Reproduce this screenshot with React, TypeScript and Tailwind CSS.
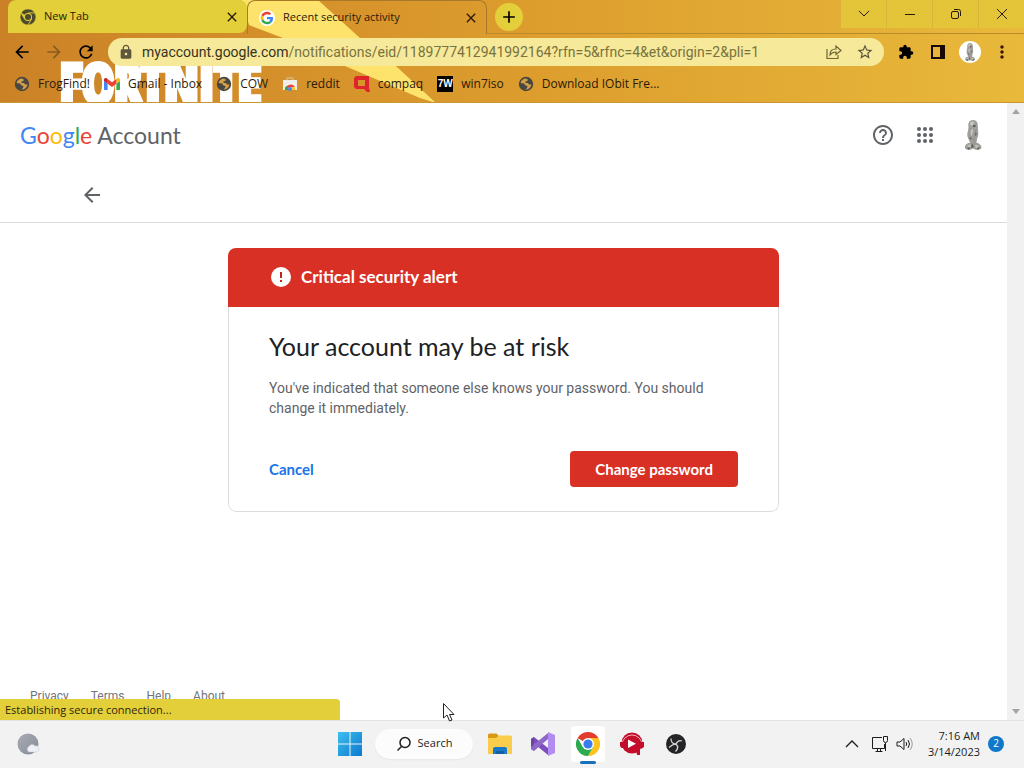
import type { ReactNode } from "react";
import {
  MdAdd,
  MdArrowBack,
  MdArrowForward,
  MdClose,
  MdExtension,
  MdHelpOutline,
  MdLock,
  MdMoreVert,
  MdRefresh,
  MdStarBorder,
} from "react-icons/md";

const ui = "font-['Open_Sans','Noto_Sans',sans-serif]";

function ChromeLogo({ className, mono = false }: { className: string; mono?: boolean }) {
  const c = mono ? ["#4b4a2c", "#4b4a2c", "#4b4a2c", "#4b4a2c"] : ["#e33b2e", "#fcc31e", "#2da94f", "#3b7ded"];
  const line = mono ? "#e2cf3a" : "none";
  return (
    <svg viewBox="0 0 48 48" className={className} aria-hidden="true">
      <path d="M24 24 3.2 12A24 24 0 0 1 44.8 12H24Z" fill={c[0]} stroke={line} strokeWidth="2" />
      <path d="M24 12H44.8A24 24 0 0 1 24 48L34.4 30Z" fill={c[1]} stroke={line} strokeWidth="2" />
      <path d="M3.2 12A24 24 0 0 0 24 48L34.4 30 24 24 13.6 30Z" fill={c[2]} stroke={line} strokeWidth="2" />
      <circle cx="24" cy="24" r="12" fill={mono ? "#e2cf3a" : "#fff"} />
      <circle cx="24" cy="24" r="9.2" fill={c[3]} />
    </svg>
  );
}

function GoogleG() {
  return (
    <svg viewBox="0 0 48 48" className="size-4 shrink-0" aria-hidden="true">
      <circle cx="24" cy="24" r="24" fill="#fff" />
      <g transform="translate(5 5) scale(.79)">
        <path fill="#EA4335" d="M24 9.5c3.54 0 6.71 1.22 9.21 3.6l6.85-6.85C35.9 2.38 30.47 0 24 0 14.62 0 6.51 5.38 2.56 13.22l7.98 6.19C12.43 13.72 17.74 9.5 24 9.5z" />
        <path fill="#4285F4" d="M46.98 24.55c0-1.57-.15-3.09-.38-4.55H24v9.02h12.94c-.58 2.96-2.26 5.48-4.78 7.18l7.73 6c4.51-4.18 7.09-10.36 7.09-17.65z" />
        <path fill="#FBBC05" d="M10.53 28.59A14.5 14.5 0 0 1 9.77 24c0-1.6.27-3.14.76-4.59l-7.98-6.19A23.9 23.9 0 0 0 0 24c0 3.88.92 7.54 2.56 10.78l7.97-6.19z" />
        <path fill="#34A853" d="M24 48c6.48 0 11.93-2.13 15.89-5.81l-7.73-6c-2.15 1.45-4.92 2.3-8.16 2.3-6.26 0-11.57-4.22-13.47-9.91l-7.98 6.19C6.51 42.62 14.62 48 24 48z" />
      </g>
    </svg>
  );
}

function Statue({ className }: { className: string }) {
  return (
    <svg viewBox="0 0 20 32" className={className} aria-hidden="true">
      <path d="M10 1C6 1 5 4 5.500 8L5 12C4 14 4 18 5.500 20L7 24C4 23.500 1.500 26 2 29 4 32 8 31 10 29.500 12 31 16 32 18.500 29 18.500 26 16 24 13.500 24L14 20C15.500 17 15.500 14 15 11L14.800 7C15 3 13 1 10 1Z" fill="#a19f9a" />
      <path d="M7 4C8 2.500 10 2 11 3L10 6 8 7ZM7 11 10 10 9 17 7 16ZM4 27 8 25 7 29ZM12 26 16 27 13 29Z" fill="#cbc9c4" />
      <path d="M10 6H12.500V8H10ZM6 18 9 19 8 21ZM12 13 14 15 12 17ZM9 24 11 28 8 29ZM14 29 17 28 15 31ZM4 29 7 28 6 31Z" fill="#5f5d59" />
      <path d="M13 10 12 15 11 22 12 25M8 9 7 14 9 21" fill="none" stroke="#8d8a85" strokeWidth=".700" />
    </svg>
  );
}

function AppsGrid() {
  const cells = [6, 12, 18];
  return (
    <svg viewBox="0 0 24 24" className="size-6" fill="currentColor" aria-hidden="true">
      {cells.map((y) => cells.map((x) => <circle key={`${x}-${y}`} cx={x} cy={y} r="2" />))}
    </svg>
  );
}

function Gmail() {
  return (
    <svg viewBox="52 42 88 66" className="h-3 w-4 shrink-0" aria-hidden="true">
      <path fill="#4285f4" d="M58 108h14V74L52 59v43c0 3.320 2.690 6 6 6" />
      <path fill="#34a853" d="M120 108h14c3.320 0 6-2.690 6-6V59l-20 15" />
      <path fill="#fbbc04" d="M120 48v26l20-15v-8c0-7.420-8.470-11.650-14.400-7.200" />
      <path fill="#ea4335" d="M72 74V48l24 18 24-18v26L96 92" />
      <path fill="#c5221f" d="M52 51v8l20 15V48l-5.600-4.200c-5.940-4.450-14.400-.220-14.400 7.200" />
    </svg>
  );
}

function Store() {
  return (
    <svg viewBox="0 0 16 16" className="size-4 shrink-0" aria-hidden="true">
      <path d="M5 4V2h6v2" fill="none" stroke="#d6c8b0" />
      <path d="M1 4h14v10H1Z" fill="#f1eee8" />
      <path d="M3 14a5.500 5.500 0 0 1 10-3H8Z" fill="#e8453c" />
      <path d="M3 14a5.500 5.500 0 0 1 1-4l3 4Z" fill="#32a350" />
      <path d="M9 14h4.500a5.500 5.500 0 0 0-1-3H8Z" fill="#f9c72f" />
      <circle cx="8" cy="13" r="2" fill="#4c85e8" />
    </svg>
  );
}

function Compaq() {
  return (
    <svg viewBox="0 0 16 16" className="size-4 shrink-0" aria-hidden="true">
      <path fillRule="evenodd" d="M2 0h13v12l1 4h-3l-3-3H2L0 11V2ZM4 4v6h7V4Z" fill="#dd252b" />
    </svg>
  );
}

function Bookmark({ icon, label }: { icon: ReactNode; label: string }) {
  return (
    <a href="#" className="flex items-center gap-2 whitespace-nowrap">
      {icon}
      {label}
    </a>
  );
}

const globe = (
  <svg viewBox="0 0 16 16" className="size-4 shrink-0" aria-hidden="true">
    <circle cx="8" cy="8" r="7.200" fill="#494740" />
    <path d="M7 2.500C4.500 3 2.800 5 2.600 7L6 7.500 7.500 9.500 9.500 10 9 12 7.500 13.500C10.500 13.500 13 11.500 13.400 8.500L11 8.500 10 7H7.500V5.500L9.500 5V3Z" fill="#d3a047" />
  </svg>
);

function BrowserChrome() {
  return (
    <header className={`relative overflow-hidden bg-linear-to-r from-[#cb8227] via-[#dc9c2d] to-[#e8b93b] text-xs text-[#2a1a08] ${ui}`}>
      <svg className="absolute top-0 left-0 h-[103px] w-[440px]" viewBox="0 0 440 103" aria-hidden="true">
        <path d="M241 0H318L360 38 398 68 436 103 420 98 345 66 283 38 249 25Z" fill="#fde36c" />
      </svg>
      <span aria-hidden="true" className="absolute top-[52px] left-[60px] font-['Open_Sans_Condensed','Roboto_Condensed','Noto_Sans_Condensed','Liberation_Sans',sans-serif] text-[54px] leading-[60px] font-black text-white [-webkit-text-stroke:5px_white]">
        FORTNITE
      </span>

      <div className="relative flex h-[34px] items-start">
        <div className="ml-2 flex h-[33px] w-[239px] items-center gap-2 rounded-t-lg rounded-br-lg bg-[#e2cf3a] pr-[7px] pl-3 text-[11px]">
          <ChromeLogo mono className="size-4" />
          <span className="flex-1">New Tab</span>
          <button aria-label="Close New Tab"><MdClose className="size-4" /></button>
        </div>
        <div className="flex h-[34px] w-[240px] items-center gap-2 rounded-t-lg border-x border-t border-[#a9792a] pr-[7px] pl-[11px] text-[11px]">
          <GoogleG />
          <span className="flex-1">Recent security activity</span>
          <button aria-label="Close Recent security activity"><MdClose className="size-4" /></button>
        </div>
        <div className="flex h-[34px] flex-1 justify-between border-b border-[#b98a2c]">
          <button aria-label="New tab" className="mt-[3px] ml-2 flex size-7 items-center justify-center rounded-full bg-[#e2cf3a]">
            <MdAdd className="size-5 text-black" />
          </button>
          <div className="flex h-7 divide-x divide-[#d6b636] bg-[#e4c53a]">
            <button aria-label="Search tabs" className="flex w-[46px] items-center justify-center">
              <svg viewBox="0 0 12 12" className="size-3" fill="none" stroke="currentColor"><path d="m1 3 5 5 5-5" /></svg>
            </button>
            <button aria-label="Minimize" className="flex w-[46px] items-center justify-center">
              <svg viewBox="0 0 12 12" className="size-3" fill="none" stroke="currentColor"><path d="M1 6.500h10" /></svg>
            </button>
            <button aria-label="Restore" className="flex w-[46px] items-center justify-center">
              <svg viewBox="0 0 12 12" className="size-3" fill="none" stroke="currentColor"><rect x="1.500" y="3.500" width="7" height="7" rx="1.500" /><path d="M4 1.500h4.500a2 2 0 0 1 2 2V8" /></svg>
            </button>
            <button aria-label="Close window" className="flex w-[45px] items-center justify-center">
              <svg viewBox="0 0 12 12" className="size-3" fill="none" stroke="currentColor"><path d="m1 1 10 10M11 1 1 11" /></svg>
            </button>
          </div>
        </div>
      </div>

      <div className="relative flex h-9 items-center gap-3 pr-1.5 pl-3">
        <button aria-label="Back"><MdArrowBack className="size-5 text-black" /></button>
        <button aria-label="Forward"><MdArrowForward className="size-5 text-[#8b5920]" /></button>
        <button aria-label="Reload"><MdRefresh className="size-5 text-black" /></button>
        <div className="flex flex-1 items-center gap-1.5">
          <div className="flex h-7 flex-1 items-center gap-2 rounded-full bg-[#f6e99a] px-2.5">
            <MdLock className="size-4 text-[#5d573c]" />
            <div className="flex-1 font-['Roboto',sans-serif] text-sm text-[#79733e]">
              <span className="text-[#36321e]">myaccount.google.com</span>/notifications/eid/1189777412941992164?rfn=5&amp;rfnc=4&amp;et&amp;origin=2&amp;pli=1
            </div>
            <button aria-label="Share" className="mr-1.5">
              <svg viewBox="0 0 16 16" className="size-4" fill="none" stroke="#6b653a" strokeWidth="1.200"><path d="M1 5v9.500h11V11M4 11c0-4 2-6 6-6V2l5 4.500-5 4V8C7 8 5.500 9 4 11Z" /></svg>
            </button>
            <button aria-label="Bookmark this page"><MdStarBorder className="size-[18px] text-[#5d573c]" /></button>
          </div>
          <div className="flex items-center">
            <button aria-label="Extensions" className="flex w-8 justify-center"><MdExtension className="size-4 text-black" /></button>
            <button aria-label="Side panel" className="flex w-8 justify-center">
              <svg viewBox="0 0 16 16" className="size-4"><path d="M2 2h12v12H2Z" fill="none" stroke="#180808" strokeWidth="2" /><path d="M10 2h4v12h-4Z" fill="#180808" /></svg>
            </button>
            <button aria-label="Profile" className="flex w-8 justify-center">
              <span className="flex size-[22px] items-center justify-center rounded-full bg-white"><Statue className="h-5 w-3" /></span>
            </button>
            <button aria-label="Menu" className="flex w-8 justify-center"><MdMoreVert className="size-5 text-[#3a1008]" /></button>
          </div>
        </div>
      </div>

      <nav aria-label="Bookmarks" className="relative flex h-[33px] items-center gap-3.5 border-b border-[#c9962f] pb-1 pl-3.5">
        <Bookmark icon={globe} label="FrogFind!" />
        <Bookmark icon={<Gmail />} label="Gmail - Inbox" />
        <Bookmark icon={globe} label="COW" />
        <Bookmark icon={<Store />} label="reddit" />
        <Bookmark icon={<Compaq />} label="compaq" />
        <Bookmark
          icon={<span className="flex size-4 items-center justify-center bg-black font-['Liberation_Sans',sans-serif] text-[10px] font-bold text-white">7W</span>}
          label="win7iso"
        />
        <Bookmark icon={globe} label="Download IObit Fre..." />
      </nav>
    </header>
  );
}

function AccountPage() {
  return (
    <main className="relative flex flex-1 bg-white font-['Roboto',sans-serif]">
      <div className="flex flex-1 flex-col">
        <div className="flex h-16 items-center justify-between pr-6 pl-5">
          <a href="#" className="flex gap-[5px] font-['Lato',sans-serif] text-[23px] text-[#5f6368]">
            <span>
              <span className="text-[#4285f4]">G</span>
              <span className="text-[#ea4335]">o</span>
              <span className="text-[#fbbc05]">o</span>
              <span className="text-[#4285f4]">g</span>
              <span className="text-[#34a853]">l</span>
              <span className="text-[#ea4335]">e</span>
            </span>
            <span>Account</span>
          </a>
          <div className="flex items-center gap-[18px] text-[#5f6368]">
            <button aria-label="Help"><MdHelpOutline className="size-6" /></button>
            <button aria-label="Google apps"><AppsGrid /></button>
            <button aria-label="Account" className="ml-2"><Statue className="h-8 w-5" /></button>
          </div>
        </div>
        <div className="flex h-14 items-center border-b border-[#dadce0] pl-20">
          <button aria-label="Go back"><MdArrowBack className="size-6 text-[#5f6368]" /></button>
        </div>

        <section className="mx-auto mt-[25px] w-[551px] max-w-full overflow-hidden rounded-lg">
          <div className="flex h-[59px] items-center gap-2 bg-[#d93025] px-[41px] pb-0.5 font-['Lato',sans-serif] text-[17px] font-bold text-white">
            <svg viewBox="0 0 24 24" className="size-6" aria-hidden="true"><circle cx="12" cy="12" r="10" fill="#fff" /><path d="M11 7h2v6h-2Zm0 8h2v2h-2Z" fill="#c5221f" /></svg>
            Critical security alert
          </div>
          <div className="rounded-b-lg border-x border-b border-[#dadce0] px-10 pt-6 pb-6">
            <h1 className="font-['Lato',sans-serif] text-[25px] leading-[30px] text-[#202124]">Your account may be at risk</h1>
            <p className="mt-[17px] text-sm leading-5 text-[#5f6368]">
              You've indicated that someone else knows your password. You should change it immediately.
            </p>
            <div className="mt-[33px] flex items-center justify-between font-['Lato',sans-serif] text-[15px] font-bold">
              <button className="text-[#1a73e8]">Cancel</button>
              <button className="h-9 rounded-sm bg-[#d93025] px-[25px] text-white">Change password</button>
            </div>
          </div>
        </section>

        <footer className="mt-auto flex gap-[22px] pb-4 pl-[30px] text-xs leading-4 text-[#70757a]">
          <a href="#">Privacy</a>
          <a href="#">Terms</a>
          <a href="#">Help</a>
          <a href="#">About</a>
        </footer>
      </div>

      <div aria-hidden="true" className="flex w-[17px] flex-col items-center justify-between bg-[#f1f1f1] py-1.5 text-[#a3a3a3]">
        <svg viewBox="0 0 8 5" className="h-[5px] w-2" fill="currentColor"><path d="M0 5 4 0l4 5Z" /></svg>
        <svg viewBox="0 0 8 5" className="h-[5px] w-2" fill="currentColor"><path d="m0 0 4 5 4-5Z" /></svg>
      </div>

      <div className={`absolute bottom-0 left-0 h-[21px] w-[340px] rounded-tr bg-[#e2cf3a] pl-[5px] text-[11px] leading-[21px] text-[#2f240a] ${ui}`}>
        Establishing secure connection...
      </div>
      <svg viewBox="0 0 12 19" className="absolute bottom-[-2px] left-[443px] h-[19px] w-3" aria-hidden="true">
        <path d="M.500.500V15L4 12l2.500 6L9 17 6.500 11.500H11Z" fill="#fff" stroke="#222" />
      </svg>
    </main>
  );
}

function Taskbar() {
  return (
    <footer className={`grid h-12 grid-cols-[336px_1fr_auto] items-center border-t border-[#e3e3e3] bg-[#f2f2f2] pb-0.5 text-xs text-[#1c1c1c] ${ui}`}>
      <button aria-label="Weather" className="ml-4 w-6">
        <svg viewBox="0 0 24 24" className="size-6">
          <defs><linearGradient id="moon" x2="1" y2="1"><stop stopColor="#a9adb4" /><stop offset="1" stopColor="#858b96" /></linearGradient></defs>
          <circle cx="12" cy="12" r="10.500" fill="url(#moon)" />
          <path d="M13 20a3 3 0 0 1 0-5.500 3.500 3.500 0 0 1 6-.5 3 3 0 0 1 2 6Z" fill="#eef0f6" stroke="#c3c7d1" strokeWidth=".500" />
        </svg>
      </button>
      <div className="flex items-center gap-3">
        <button aria-label="Start" className="flex w-[27px] justify-center">
          <svg viewBox="0 0 24 24" className="size-6">
            <defs><linearGradient id="win" x2="1" y2="1" gradientUnits="objectBoundingBox"><stop stopColor="#3cc0ee" /><stop offset="1" stopColor="#0b78cf" /></linearGradient></defs>
            <path d="M0 0h11.500v11.500H0Zm12.500 0H24v11.500H12.500ZM0 12.500h11.500V24H0Zm12.500 0H24V24H12.500Z" fill="url(#win)" />
          </svg>
        </button>
        <button className="flex h-[30px] w-[98px] items-center justify-center gap-1.5 rounded-full bg-[#fcfcfc] text-[11px] shadow-xs">
          <svg viewBox="0 0 16 16" className="size-4" fill="none" stroke="currentColor" strokeWidth="1.500"><circle cx="9" cy="6.500" r="5" /><path d="m5.500 10.500-4 4" /></svg>
          Search
        </button>
        <div className="flex items-center">
          <button aria-label="File Explorer" className="flex w-[30px] justify-center">
            <svg viewBox="0 0 24 24" className="size-6"><path d="M0 3a1.500 1.500 0 0 1 1.500-1.500h7L11 4 8 7H0Z" fill="#d79a12" /><path d="M0 6h8l3-2.500h11.500A1.500 1.500 0 0 1 24 5v17H0Z" fill="#fbcd4c" /><path d="M5 22v-5a2 2 0 0 1 2-2h10a2 2 0 0 1 2 2v5Z" fill="#1979c8" /><path d="M8 19h8v3H8Z" fill="#155fa5" /></svg>
          </button>
          <button aria-label="Visual Studio" className="flex w-14 justify-center">
            <svg viewBox="0 0 24 24" className="size-6"><path d="M0 7 3 5l14 11v7L0 9Z" fill="#7d4dbb" /><path d="M0 17V7l3-2v14Z" fill="#68489f" /><path d="m3 19 14-12V1L0 15v2Z" fill="#8e68c8" /><path d="m17 0 7 3v18l-7 3Z" fill="#b28cf0" /></svg>
          </button>
          <button aria-label="Google Chrome" className="relative -my-1.5 flex w-[34px] items-center justify-center rounded bg-white py-1.5">
            <ChromeLogo className="size-6" />
            <span className="absolute bottom-[-2px] h-[3px] w-4 rounded-full bg-[#1a6fbd]" />
          </button>
          <button aria-label="Media player" className="flex w-[54px] justify-center">
            <svg viewBox="0 0 24 24" className="size-6"><circle cx="12" cy="11" r="10.500" fill="#c40d2b" /><path d="M2 13A10 10 0 0 1 22 13" fill="none" stroke="#e8aeb7" /><circle cx="12" cy="12" r="7.500" fill="#c40d2b" /><path d="M8 7.500v8.500l8-4.200Z" fill="#fff" /><path d="M0 10h3v6H1.500L0 14Zm21 0h3v5l-3 2ZM16 18h4v5h-3Z" fill="#c40d2b" /></svg>
          </button>
          <button aria-label="OBS Studio" className="flex w-[34px] items-center justify-center">
            <svg viewBox="0 0 20 20" className="size-5"><circle cx="10" cy="10" r="10" fill="#242326" /><path d="M5 4.500c0 4 2 5.500 5 5.500 1-2 3-4 6-3M10 10c2 2 2 5-.5 7.500M10 10c-3 0-5 1.500-7 3.500" fill="none" stroke="#d2d2d2" strokeWidth="1.300" /></svg>
          </button>
        </div>
      </div>
      <div className="flex items-center gap-2 pr-5">
        <button aria-label="Show hidden icons" className="mr-1"><svg viewBox="0 0 14 14" className="size-3.5" fill="none" stroke="currentColor" strokeWidth="1.300"><path d="m1 10 6-6 6 6" /></svg></button>
        <div className="mr-[7px] flex items-center gap-1.5">
          <button aria-label="Network"><svg viewBox="0 0 18 18" className="size-[18px]" fill="none" stroke="currentColor"><path d="M11 2.500H1.500v11h12V9M4.500 16.500h7M6.500 14v2M9.500 14v2M12.500 1.500h4v4a2 2 0 0 1-4 0ZM14.500 8v8" /></svg></button>
          <button aria-label="Volume"><svg viewBox="0 0 18 18" className="size-[18px]" fill="none" stroke="currentColor"><path d="M2 7v4h3l4 3.500v-11L5 7ZM11 7q1.500 2 0 4M13 5q3 4 0 8" /><path d="M15 3q4.500 6 0 12" stroke="#999" /></svg></button>
        </div>
        <time className="text-right text-[11px] leading-4">
          7:16 AM
          <br />
          3/14/2023
        </time>
        <span className="flex size-4 items-center justify-center rounded-full bg-[#0f78cb] text-[10px] text-white">2</span>
      </div>
    </footer>
  );
}

export default function App() {
  return (
    <div className="flex min-h-screen flex-col">
      <BrowserChrome />
      <AccountPage />
      <Taskbar />
    </div>
  );
}
